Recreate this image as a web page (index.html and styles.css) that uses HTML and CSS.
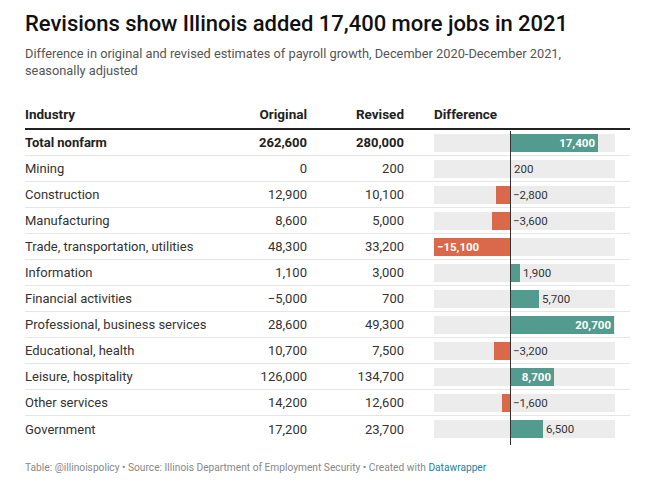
FILE: index.html
```html
<!DOCTYPE html>
<html>
<head>
<meta charset="utf-8">
<link rel="stylesheet" href="styles.css">
</head>
<body>
<div class="chart">
  <h1 class="title">Revisions show Illinois added 17,400 more jobs in 2021</h1>
  <p class="subtitle">Difference in original and revised estimates of payroll growth, December 2020-December 2021, seasonally adjusted</p>
  <div class="table">
    <div class="row head">
      <div class="c-ind">Industry</div>
      <div class="c-num">Original</div>
      <div class="c-num">Revised</div>
      <div class="c-diff-h">Difference</div>
    </div>
    <div class="tbody">
      <div class="axis"></div>
      <div class="row bold">
        <div class="c-ind">Total nonfarm</div><div class="c-num">262,600</div><div class="c-num">280,000</div>
        <div class="c-diff"><div class="track"><div class="neg"></div><div class="pos"><div class="bar g in" style="width:88px">17,400</div></div></div></div>
      </div>
      <div class="row">
        <div class="c-ind">Mining</div><div class="c-num">0</div><div class="c-num">200</div>
        <div class="c-diff"><div class="track"><div class="neg"></div><div class="pos"><div class="bar g" style="width:1px"></div><span class="lbl">200</span></div></div></div>
      </div>
      <div class="row">
        <div class="c-ind">Construction</div><div class="c-num">12,900</div><div class="c-num">10,100</div>
        <div class="c-diff"><div class="track"><div class="neg"><div class="bar o" style="width:14px"></div></div><div class="pos"><span class="lbl">−2,800</span></div></div></div>
      </div>
      <div class="row">
        <div class="c-ind">Manufacturing</div><div class="c-num">8,600</div><div class="c-num">5,000</div>
        <div class="c-diff"><div class="track"><div class="neg"><div class="bar o" style="width:18px"></div></div><div class="pos"><span class="lbl">−3,600</span></div></div></div>
      </div>
      <div class="row">
        <div class="c-ind">Trade, transportation, utilities</div><div class="c-num">48,300</div><div class="c-num">33,200</div>
        <div class="c-diff"><div class="track"><div class="neg"><div class="bar o in-l" style="width:76px">−15,100</div></div><div class="pos"></div></div></div>
      </div>
      <div class="row">
        <div class="c-ind">Information</div><div class="c-num">1,100</div><div class="c-num">3,000</div>
        <div class="c-diff"><div class="track"><div class="neg"></div><div class="pos"><div class="bar g" style="width:10px"></div><span class="lbl">1,900</span></div></div></div>
      </div>
      <div class="row">
        <div class="c-ind">Financial activities</div><div class="c-num">−5,000</div><div class="c-num">700</div>
        <div class="c-diff"><div class="track"><div class="neg"></div><div class="pos"><div class="bar g" style="width:29px"></div><span class="lbl">5,700</span></div></div></div>
      </div>
      <div class="row">
        <div class="c-ind">Professional, business services</div><div class="c-num">28,600</div><div class="c-num">49,300</div>
        <div class="c-diff"><div class="track"><div class="neg"></div><div class="pos"><div class="bar g in" style="width:104px">20,700</div></div></div></div>
      </div>
      <div class="row">
        <div class="c-ind">Educational, health</div><div class="c-num">10,700</div><div class="c-num">7,500</div>
        <div class="c-diff"><div class="track"><div class="neg"><div class="bar o" style="width:16px"></div></div><div class="pos"><span class="lbl">−3,200</span></div></div></div>
      </div>
      <div class="row">
        <div class="c-ind">Leisure, hospitality</div><div class="c-num">126,000</div><div class="c-num">134,700</div>
        <div class="c-diff"><div class="track"><div class="neg"></div><div class="pos"><div class="bar g in" style="width:44px">8,700</div></div></div></div>
      </div>
      <div class="row">
        <div class="c-ind">Other services</div><div class="c-num">14,200</div><div class="c-num">12,600</div>
        <div class="c-diff"><div class="track"><div class="neg"><div class="bar o" style="width:8px"></div></div><div class="pos"><span class="lbl">−1,600</span></div></div></div>
      </div>
      <div class="row last">
        <div class="c-ind">Government</div><div class="c-num">17,200</div><div class="c-num">23,700</div>
        <div class="c-diff"><div class="track"><div class="neg"></div><div class="pos"><div class="bar g" style="width:33px"></div><span class="lbl">6,500</span></div></div></div>
      </div>
    </div>
  </div>
  <p class="footer">Table: @illinoispolicy • Source: Illinois Department of Employment Security • Created with <span class="dw">Datawrapper</span></p>
</div>
</body>
</html>
```

FILE: styles.css
```css
* { box-sizing: border-box; }
html, body { margin: 0; padding: 0; background: #fff; }
body { font-family: Roboto, "Liberation Sans", sans-serif; color: #333; }
.chart { padding: 10px 20px 0 25px; width: 650px; }
.title { margin: 0; font-size: 22px; font-weight: 500; line-height: 28px; color: #111; letter-spacing: -0.03px; }
.subtitle { margin: 7px 0 0; font-size: 12.8px; line-height: 17px; color: #555; width: 560px; }
.table { margin-top: 22px; width: 605px; }
.row { display: grid; grid-template-columns: 190px 92px 97px 226px; height: 26px; align-items: center; font-size: 13px; border-bottom: 1px solid #e6e6e6; }
.row.head { height: 29px; font-weight: 700; font-size: 13.5px; border-bottom: 2px solid #222; align-items: center; color: #222; padding-bottom: 2px; }
.row.bold { font-weight: 700; color: #222; }
.row.last { border-bottom: none; }
.c-num { text-align: right; }
.c-diff-h { padding-left: 30px; }
.c-diff { padding-left: 30px; padding-right: 15px; height: 100%; }
.tbody { position: relative; }
.axis { position: absolute; left: 485px; top: 1px; bottom: -3px; width: 1px; background: #333; z-index: 2; }
.track { display: flex; height: 100%; background: linear-gradient(#ececec, #ececec) center / 100% 18px no-repeat; }
.neg { width: 76px; display: flex; justify-content: flex-end; align-items: center; }
.pos { flex: 1; display: flex; align-items: center; }
.bar { height: 18px; font-size: 11.5px; font-weight: 700; color: #fff; line-height: 18px; white-space: nowrap; }
.bar.g { background: #539b8e; }
.bar.o { background: #d9694a; }
.bar.in { text-align: right; padding-right: 3px; }
.bar.in-l { text-align: left; padding-left: 3px; }
.lbl { font-size: 11.5px; color: #333; padding-left: 3px; font-weight: 400; }
.footer { margin: 20px 0 0; font-size: 10.2px; color: #888; }
.dw { color: #1d81a2; }
```
